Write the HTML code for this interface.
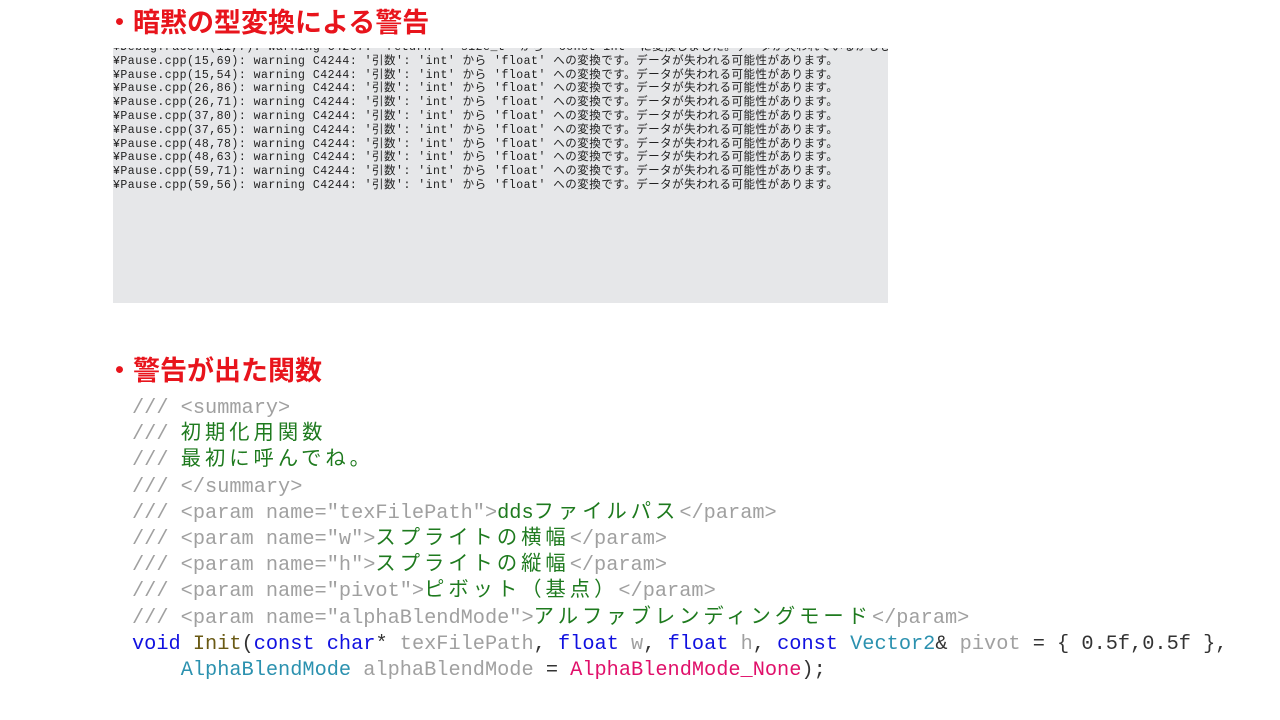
<!DOCTYPE html>
<html><head><meta charset="utf-8"><style>
body{margin:0;width:1280px;height:720px;background:#fff;position:relative;overflow:hidden;font-family:"Liberation Sans","Noto Sans CJK JP",sans-serif}
.t{position:absolute;left:106px;color:#e8141c;font-weight:bold;font-size:27px;line-height:30px;white-space:nowrap}
.box{position:absolute;left:113px;top:48px;width:775px;height:255px;background:#e6e7e9;overflow:hidden}
.con{position:absolute;left:0;top:0;font-family:"Liberation Mono","Noto Sans CJK JP",monospace;font-size:11.5px;color:#222;letter-spacing:0.5px}
.con div{height:13.8px;line-height:13.8px;white-space:pre}
.code{position:absolute;left:132px;top:396px;font-family:"Liberation Mono",monospace;font-size:20.3px;color:#a0a0a0}
.code div{height:26.2px;line-height:26.2px;white-space:pre}
.j{font-family:"Noto Sans CJK JP",sans-serif;letter-spacing:4px;line-height:0}
.g{color:#1e7a1e}.b{color:#1010e0}.k{color:#6a5a14}.c{color:#2b91af}.m{color:#e0106a}.d{color:#333}
</style></head><body>
<div class="t" style="top:8px">・暗黙の型変換による警告</div>
<div class="box"><div class="con" style="top:-7px"><div>¥DebugTrace.h(11,7): warning C4267: 'return': 'size_t' から 'const int' に変換しました。データが失われているかもしれません。</div><div>¥Pause.cpp(15,69): warning C4244: '引数': 'int' から 'float' への変換です。データが失われる可能性があります。</div><div>¥Pause.cpp(15,54): warning C4244: '引数': 'int' から 'float' への変換です。データが失われる可能性があります。</div><div>¥Pause.cpp(26,86): warning C4244: '引数': 'int' から 'float' への変換です。データが失われる可能性があります。</div><div>¥Pause.cpp(26,71): warning C4244: '引数': 'int' から 'float' への変換です。データが失われる可能性があります。</div><div>¥Pause.cpp(37,80): warning C4244: '引数': 'int' から 'float' への変換です。データが失われる可能性があります。</div><div>¥Pause.cpp(37,65): warning C4244: '引数': 'int' から 'float' への変換です。データが失われる可能性があります。</div><div>¥Pause.cpp(48,78): warning C4244: '引数': 'int' から 'float' への変換です。データが失われる可能性があります。</div><div>¥Pause.cpp(48,63): warning C4244: '引数': 'int' から 'float' への変換です。データが失われる可能性があります。</div><div>¥Pause.cpp(59,71): warning C4244: '引数': 'int' から 'float' への変換です。データが失われる可能性があります。</div><div>¥Pause.cpp(59,56): warning C4244: '引数': 'int' から 'float' への変換です。データが失われる可能性があります。</div></div></div>
<div class="t" style="top:356px">・警告が出た関数</div>
<div class="code"><div>/// &lt;summary&gt;</div><div>/// <span class="g j">初期化用関数</span></div><div>/// <span class="g j">最初に呼んでね。</span></div><div>/// &lt;/summary&gt;</div><div>/// &lt;param name="texFilePath"&gt;<span class="g">dds<span class="j">ファイルパス</span></span>&lt;/param&gt;</div><div>/// &lt;param name="w"&gt;<span class="g j">スプライトの横幅</span>&lt;/param&gt;</div><div>/// &lt;param name="h"&gt;<span class="g j">スプライトの縦幅</span>&lt;/param&gt;</div><div>/// &lt;param name="pivot"&gt;<span class="g j">ピボット（基点）</span>&lt;/param&gt;</div><div>/// &lt;param name="alphaBlendMode"&gt;<span class="g j">アルファブレンディングモード</span>&lt;/param&gt;</div><div><span class="b">void</span> <span class="k">Init</span><span class="d">(</span><span class="b">const char</span><span class="d">* </span>texFilePath<span class="d">, </span><span class="b">float</span> w<span class="d">, </span><span class="b">float</span> h<span class="d">, </span><span class="b">const</span> <span class="c">Vector2</span><span class="d">&amp;</span> pivot <span class="d">= { 0.5f,0.5f },</span></div><div>    <span class="c">AlphaBlendMode</span> alphaBlendMode <span class="d">=</span> <span class="m">AlphaBlendMode_None</span><span class="d">);</span></div></div>
</body></html>
